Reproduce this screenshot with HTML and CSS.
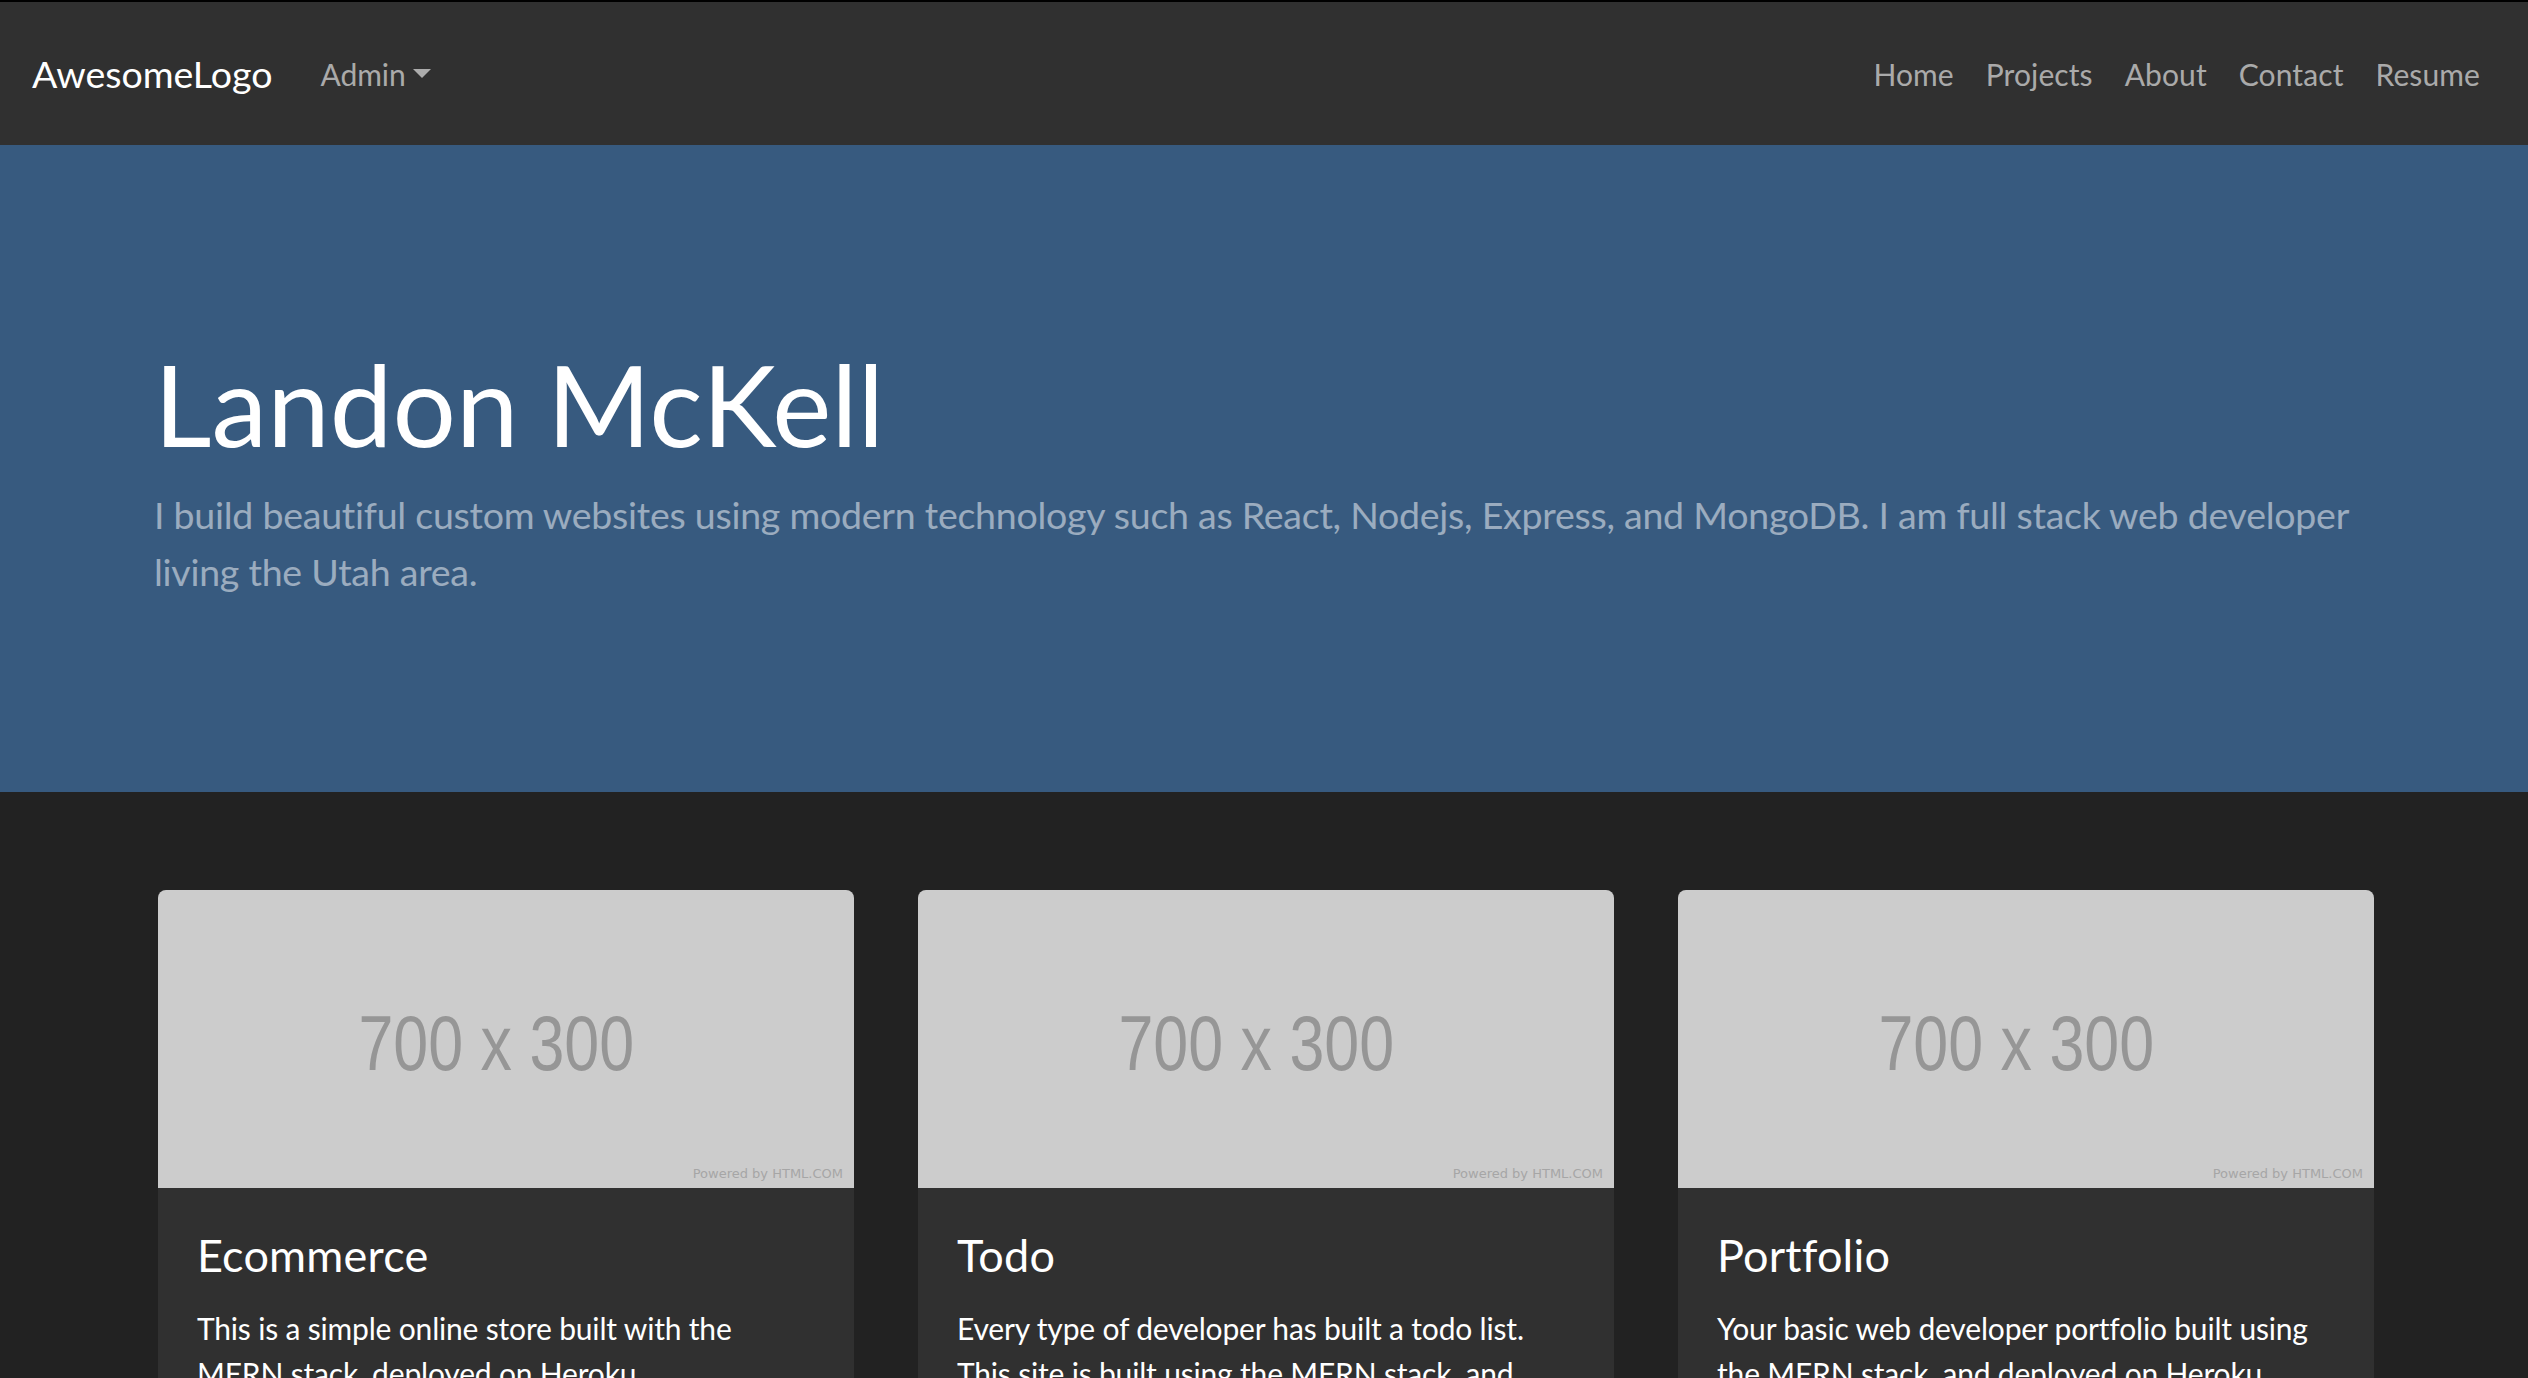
FILE: index.html
```html
<!DOCTYPE html>
<html lang="en">
<head>
<meta charset="utf-8">
<title>Landon McKell</title>
<link rel="stylesheet" href="styles.css">
</head>
<body>
<nav class="navbar">
  <div class="nav-left">
    <a class="brand" href="#">AwesomeLogo</a>
    <a class="nav-link dropdown-toggle" href="#">Admin</a>
  </div>
  <div class="nav-right">
    <a class="nav-link" href="#">Home</a>
    <a class="nav-link" href="#">Projects</a>
    <a class="nav-link" href="#">About</a>
    <a class="nav-link" href="#">Contact</a>
    <a class="nav-link" href="#">Resume</a>
  </div>
</nav>

<header class="hero">
  <div class="container">
    <h1 class="display">Landon McKell</h1>
    <p class="lead">I build beautiful custom websites using modern technology such as React, Nodejs, Express, and MongoDB. I am full stack web developer living the Utah area.</p>
  </div>
</header>

<main class="projects">
  <div class="container">
    <div class="card-grid">
      <article class="card">
        <div class="card-img"><span class="img-size">700 x 300</span><span class="img-credit">Powered by HTML.COM</span></div>
        <div class="card-body">
          <h4 class="card-title">Ecommerce</h4>
          <p class="card-text">This is a simple online store built with the MERN stack, deployed on Heroku.</p>
        </div>
      </article>
      <article class="card">
        <div class="card-img"><span class="img-size">700 x 300</span><span class="img-credit">Powered by HTML.COM</span></div>
        <div class="card-body">
          <h4 class="card-title">Todo</h4>
          <p class="card-text">Every type of developer has built a todo list. This site is built using the MERN stack, and deployed on Heroku.</p>
        </div>
      </article>
      <article class="card">
        <div class="card-img"><span class="img-size">700 x 300</span><span class="img-credit">Powered by HTML.COM</span></div>
        <div class="card-body">
          <h4 class="card-title">Portfolio</h4>
          <p class="card-text">Your basic web developer portfolio built using the MERN stack, and deployed on Heroku.</p>
        </div>
      </article>
    </div>
  </div>
</main>
</body>
</html>
```

FILE: styles.css
```css
* { box-sizing: border-box; }

html, body {
  margin: 0;
  padding: 0;
}

body {
  background: #222222;
  color: #ffffff;
  font-family: Lato, "Open Sans", "Liberation Sans", sans-serif;
  font-size: 30px;
  line-height: 1.5;
}

a { text-decoration: none; }

/* ---------- navbar ---------- */
.navbar {
  display: flex;
  align-items: center;
  justify-content: space-between;
  background: #303030;
  border-top: 2px solid #000000;
  padding: 34px 32px 32px;
}

.nav-left, .nav-right {
  display: flex;
  align-items: center;
}

.brand {
  color: #ffffff;
  font-size: 37.5px;
  line-height: 56.25px;
  margin-right: 32px;
}

.nav-link {
  color: rgba(255, 255, 255, 0.6);
  font-size: 30px;
  line-height: 45px;
  padding: 16px 16px;
  display: block;
}

.nav-right .nav-link {
  letter-spacing: 0.1px;
}

.dropdown-toggle::after {
  content: "";
  display: inline-block;
  margin-left: 7px;
  vertical-align: 8px;
  border-top: 9px solid rgba(255, 255, 255, 0.6);
  border-left: 9px solid transparent;
  border-right: 9px solid transparent;
}

/* ---------- hero ---------- */
.container {
  max-width: 2280px;
  margin: 0 auto;
  padding: 0 30px;
}

.hero {
  background: #375a7f;
  padding: 192px 0;
}

.display {
  margin: 0 0 16px;
  font-size: 112px;
  font-weight: 400;
  line-height: 1.2;
  color: #ffffff;
}

.lead {
  margin: 0;
  font-size: 37.5px;
  font-weight: 400;
  line-height: 1.5;
  letter-spacing: -0.25px;
  color: rgba(255, 255, 255, 0.5);
}

/* ---------- cards ---------- */
.projects {
  padding-top: 98px;
}

.card-grid {
  display: grid;
  grid-template-columns: repeat(3, 696px);
  justify-content: end;
  gap: 64px;
}

.card {
  background: #303030;
  border-radius: 8px;
  overflow: hidden;
}

.card-img {
  position: relative;
  height: 298px;
  background: #cccccc;
  display: flex;
  align-items: center;
  justify-content: center;
}

.img-size {
  font-family: "Liberation Sans", Arial, sans-serif;
  font-size: 78px;
  line-height: 1;
  color: #969696;
  transform: translate(-10px, 4px) scaleX(0.805);
}

.img-credit {
  position: absolute;
  right: 11px;
  bottom: 6px;
  font-family: "DejaVu Sans", sans-serif;
  font-size: 13px;
  line-height: 1.2;
  color: #a6a6a6;
}

.card-body {
  padding: 40px 40px 40px 39px;
}

.card-title {
  margin: 0 0 24px;
  font-size: 45px;
  font-weight: 400;
  line-height: 1.2;
  letter-spacing: 0.2px;
}

.card-text {
  margin: 0;
  font-size: 30px;
  line-height: 1.5;
  letter-spacing: -0.18px;
}
```
